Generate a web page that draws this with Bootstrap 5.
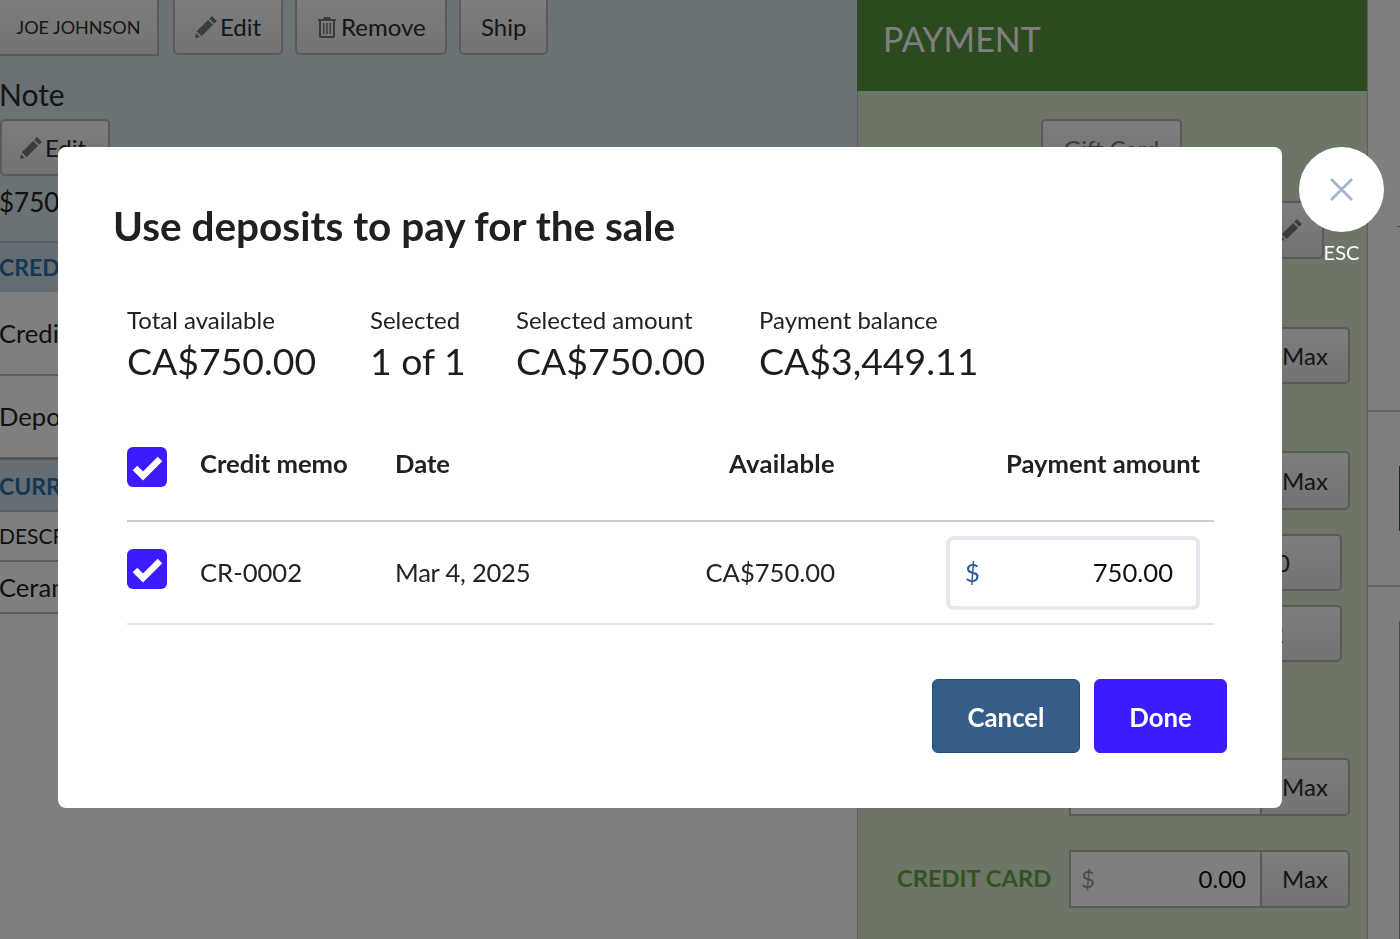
<!DOCTYPE html>
<html lang="en">
<head>
<meta charset="utf-8">
<title>Use deposits</title>
<link rel="stylesheet" href="https://cdn.jsdelivr.net/npm/bootstrap@5.3.0/dist/css/bootstrap.min.css">
<style>
html,body{height:939px;overflow:hidden}
body{font-family:"Lato","Liberation Sans",sans-serif;color:#222;background:#fff}
.pg{display:flex;height:939px;overflow:hidden}
.lft{width:857px;flex:none;display:flex;flex-direction:column}
.lft-top{background:#d6e4ea;height:243px;flex:none;border-bottom:2px solid #bbb}
.tbtns{display:flex;gap:12px;align-items:flex-start;height:76px}
.gbtn{background:linear-gradient(#fbfbfb,#e6e6e6);border:2px solid #b4b4b4;border-radius:5px;color:#2c2c2c;font-size:24px;line-height:28px;padding:0 20px;display:inline-flex;align-items:center;gap:3px;white-space:nowrap}
.tbtns .gbtn{height:55px;border-top:0;border-top-left-radius:0;border-top-right-radius:0}
.tbtns .gbtn.cust{width:159px;height:56px;border-radius:0;border-left:0;font-size:18px;justify-content:center;padding:0;margin-right:2px}
.tbtns .we{width:110px}
.tbtns .wr{width:152px}
.tbtns .ws{width:89px}
.gbtn svg{fill:#777;flex:none}
.wr svg{margin-right:1px}
.nt{font-size:30px;line-height:36px;margin:0 0 0 -1px;height:43px;color:#2a2a2a}
.lft-top .gbtn.edt{height:57px;width:110px;padding:0 0 0 18px}
.amt{font-size:26px;line-height:34px;margin:9px 0 0 -1px}
.hdrow{background:#c9dbe8;color:#2f6ea9;font-weight:700;font-size:23px;display:flex;align-items:center;padding-bottom:1px;text-indent:-1px}
.r1{height:49px}
.rw{font-size:25.6px;display:flex;align-items:center;border-bottom:2px solid #bbb;color:#222;text-indent:-1px}
.r2{height:84px}
.r3{height:84px;border-bottom:3px solid #aaa}
.r4{height:52px;border-bottom:2px solid #bbb;padding:2px 0 0}
.r5{height:50px;font-size:21px}
.r6{height:52px}
.rgt{width:511px;flex:none;background:#d8eacc;border-left:1px solid #bbb;border-right:1px solid #bbb;display:flex;flex-direction:column}
.payh{background:#58943f;color:#fff;height:91px;font-size:34px;font-weight:400;display:flex;align-items:center;padding:0 0 13px 26px;flex:none;margin:0 0 0 -1px}
.payb{display:flex;flex-direction:column;align-items:flex-end;padding-right:17px}
.gft{width:141px;height:60px;margin:28px 168px 0 0;justify-content:center;color:#777}
.pen{width:66px;height:58px;margin:22px 26px 0 0;justify-content:flex-end;padding:0 20px}
.ig{display:flex;width:281px;height:58px}
.ig .fld{flex:1;background:#fff;border:2px solid #b4b4b4;border-right:0;display:flex;justify-content:space-between;align-items:center;font-size:24px;padding:0 14px 0 10px;color:#111}
.ig .fld span:first-child{color:#999}
.ig .gbtn{width:90px;justify-content:center;border-radius:0 5px 5px 0;padding:0}
.ig1{margin-top:68px;height:57px}
.ig2{margin-top:67px;height:59px}
.pl{width:100px;height:57px;margin-right:8px;justify-content:flex-end;padding:0 50px 0 0}
.pl1{margin-top:24px}
.pl2{margin-top:14px;padding-right:56px}
.ig3{margin-top:96px}
.ccr{display:flex;align-items:center;margin-top:34px;width:100%;justify-content:space-between;padding-left:39px}
.ccl{color:#66a945;font-weight:700;font-size:23.7px}
.far{flex:1;background:#fff;overflow:hidden;display:flex;flex-direction:column}
.far .rl{height:2px;background:#ccc;flex:none}
.rl1{margin-top:183px}
.rl2{margin-top:54px}
.tick{height:1px;width:3px;background:#999;margin:226px 0 0 auto;flex:none}
.sb1{height:65px;width:1px;background:#3d5c3d;margin:54px 0 0 auto;flex:none}
.sb2{height:319px;width:1px;background:#999;margin:34px 0 0 auto;flex:none}
.modal-backdrop.dim{opacity:.5}
.mdl{display:block;overflow:visible}
.dlg{width:1224px;max-width:none;margin:147px 0 0 58px;position:relative}
.dlg .modal-content{border:0;border-radius:8px;height:661px;padding:54px 55px 0 55px;color:#1d1d1f}
.ttl{font-size:40.5px;line-height:50px;font-weight:700;margin:0;color:#1f2021;height:50px}
.sts{display:flex;margin:51px 0 0 14px;height:84px}
.st{flex:none}
.st1,.st3{width:243px}
.st2{width:146px}
.st div:first-child{font-size:24px;line-height:36px;color:#222}
.st div:last-child{font-size:37.4px;line-height:46px;color:#1d1d1f}
.tb{margin:41px 0 0 14px;width:1087px;table-layout:fixed;border-collapse:collapse;font-size:25.6px}
.tb th{font-weight:700;font-size:25.6px;height:94px;border-bottom:2px solid #ccccd2;padding:17px 0 0;vertical-align:top;color:#202124}
.tb td{height:103px;border-bottom:2px solid #e5e5ea;padding:0;vertical-align:middle;color:#222}
.cbx{display:block;width:40px;height:40px;border-radius:6px;background:#3a1cff}
.tb th .cbx{margin-top:3px}
.tb td .cbx{margin-top:-8px}
.tb .dtc{letter-spacing:-.25px}
.tb .avl{letter-spacing:.3px}
.pah{display:block;margin-right:14px}
.amtin{width:254px;height:74px;border:4px solid #e6e6ec;border-radius:8px;display:flex;justify-content:space-between;align-items:center;padding:0 23px 0 15px;margin-left:auto;margin-right:14px;color:#111}
.amtin span:first-child{color:#2b5a94}
.acts{display:flex;justify-content:flex-end;gap:14px;margin:54px 0 0}
.acts .btn{height:74px;font-size:25.8px;font-weight:700;border-radius:6px;color:#fff;padding-top:8px}
.cnl{width:148px;background:#365d87;border:1px solid #1e4d7b}
.dn{width:133px;background:#3a1cff;border:1px solid #3a1cff}
.clsx{position:absolute;left:1241px;top:0;width:85px;height:85px;border-radius:50%;background:#fff;border:0;display:flex;align-items:center;justify-content:center;padding:0}
.esc{position:absolute;left:1241px;width:85px;top:91px;text-align:center;color:#fff;font-size:20px;line-height:28px}
</style>
</head>
<body>
<div class="pg">
  <div class="lft">
    <div class="lft-top">
      <div class="tbtns">
        <span class="gbtn cust">JOE JOHNSON</span>
        <span class="gbtn we"><svg width="22" height="24" viewBox="1 0 20 22"><path d="M16.500 1l4.500 4.500-2.500 2.500L14 3.500zM13 4.500L17.500 9 7 19.500 2.500 15zM1.800 16.500l3.700 3.700L1 21z"/></svg>Edit</span>
        <span class="gbtn wr"><svg width="20" height="24" viewBox="0 0 20 22"><path d="M7 1h6l1 2h5v2h-1v15a2 2 0 0 1-2 2H4a2 2 0 0 1-2-2V5H1V3h5zM4 5v15h12V5zM6 7h1.500v11H6zm3.200 0h1.500v11H9.200zm3.300 0H14v11h-1.500z"/></svg>Remove</span>
        <span class="gbtn ws">Ship</span>
      </div>
      <p class="nt">Note</p>
      <span class="gbtn edt"><svg width="22" height="24" viewBox="1 0 20 22"><path d="M16.500 1l4.500 4.500-2.500 2.500L14 3.500zM13 4.500L17.500 9 7 19.500 2.500 15zM1.800 16.500l3.700 3.700L1 21z"/></svg>Edit</span>
      <div class="amt">$750.00</div>
    </div>
    <div class="hdrow r1">CREDIT</div>
    <div class="rw r2">Credit memo</div>
    <div class="rw r3">Deposit</div>
    <div class="hdrow r4">CURRENT</div>
    <div class="rw r5">DESCRIPTION</div>
    <div class="rw r6">Ceramic</div>
  </div>
  <div class="rgt">
    <h2 class="payh">PAYMENT</h2>
    <div class="payb">
      <span class="gbtn gft">Gift Card</span>
      <span class="gbtn pen"><svg width="22" height="24" viewBox="1 0 20 22"><path d="M16.500 1l4.500 4.500-2.500 2.500L14 3.500zM13 4.500L17.500 9 7 19.500 2.500 15zM1.800 16.500l3.700 3.700L1 21z"/></svg></span>
      <div class="ig ig1"><div class="fld"></div><span class="gbtn">Max</span></div>
      <div class="ig ig2"><div class="fld"></div><span class="gbtn">Max</span></div>
      <span class="gbtn pl pl1">0</span>
      <span class="gbtn pl pl2">2</span>
      <div class="ig ig3"><div class="fld"></div><span class="gbtn">Max</span></div>
      <div class="ccr"><span class="ccl">CREDIT CARD</span><div class="ig"><div class="fld"><span>$</span><span>0.00</span></div><span class="gbtn">Max</span></div></div>
    </div>
  </div>
  <div class="far"><div class="tick"></div><div class="rl rl1"></div><div class="sb1"></div><div class="rl rl2"></div><div class="sb2"></div></div>
</div>
<div class="modal-backdrop show dim"></div>
<div class="modal show mdl">
  <div class="modal-dialog dlg">
    <div class="modal-content">
      <h1 class="ttl">Use deposits to pay for the sale</h1>
      <div class="sts">
        <div class="st st1"><div>Total available</div><div>CA$750.00</div></div>
        <div class="st st2"><div>Selected</div><div>1 of 1</div></div>
        <div class="st st3"><div>Selected amount</div><div>CA$750.00</div></div>
        <div class="st"><div>Payment balance</div><div>CA$3,449.11</div></div>
      </div>
      <table class="tb">
        <colgroup><col style="width:73px"><col style="width:195px"><col style="width:200px"><col style="width:240px"><col></colgroup>
        <thead><tr>
          <th><svg class="cbx" viewBox="0 0 40 40"><path d="M8 21l8 8L33 12" fill="none" stroke="#fff" stroke-width="6.500"/></svg></th>
          <th>Credit memo</th><th>Date</th><th class="text-end avl">Available</th><th class="text-end"><span class="pah">Payment amount</span></th>
        </tr></thead>
        <tbody><tr>
          <td><svg class="cbx" viewBox="0 0 40 40"><path d="M8 21l8 8L33 12" fill="none" stroke="#fff" stroke-width="6.500"/></svg></td>
          <td>CR-0002</td><td class="dtc">Mar 4, 2025</td><td class="text-end">CA$750.00</td>
          <td><div class="amtin"><span>$</span><span>750.00</span></div></td>
        </tr></tbody>
      </table>
      <div class="acts">
        <button type="button" class="btn cnl">Cancel</button>
        <button type="button" class="btn dn">Done</button>
      </div>
    </div>
    <button type="button" class="clsx" aria-label="Close"><svg width="26" height="26" viewBox="0 0 26 26"><path d="M2 2l21 21M23 2L2 23" stroke="#a3b5c9" stroke-width="2.800" fill="none"/></svg></button>
    <div class="esc">ESC</div>
  </div>
</div>
<script src="https://cdn.jsdelivr.net/npm/bootstrap@5.3.0/dist/js/bootstrap.bundle.min.js"></script>
</body>
</html>
